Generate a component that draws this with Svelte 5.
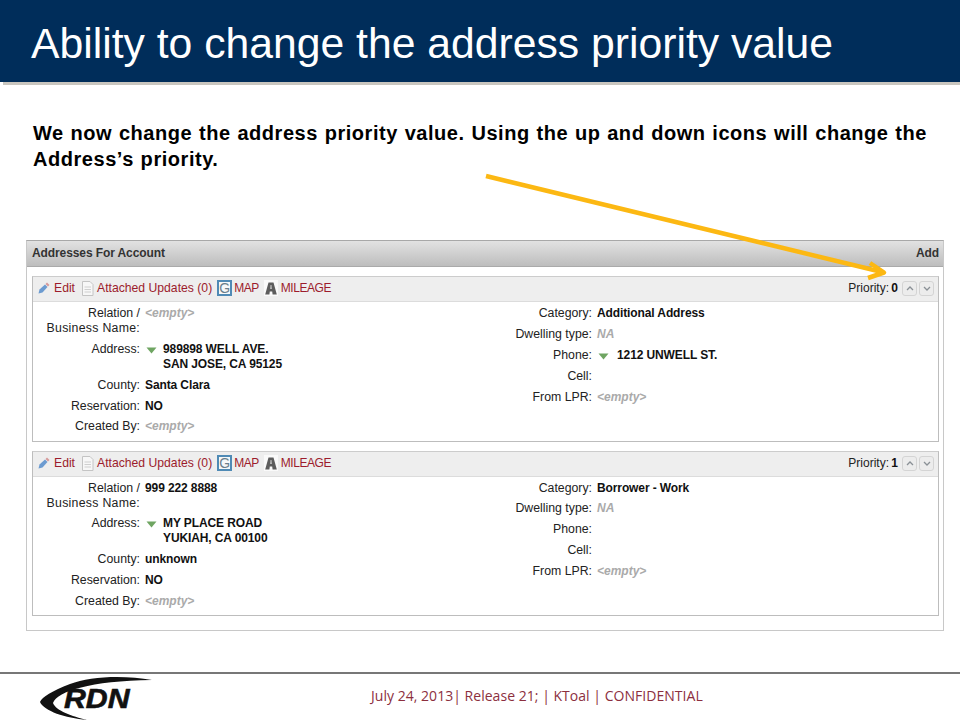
<script>
  const cards = [
    { priority: '0', h: 166, left: [
        { label: ['Relation /', 'Business Name:'], empty: '<empty>', h: 36 },
        { label: ['Address:'], addr: ['989898 WELL AVE.', 'SAN JOSE, CA 95125'], h: 36 },
        { label: ['County:'], value: 'Santa Clara', h: 21 },
        { label: ['Reservation:'], value: 'NO', h: 20 },
        { label: ['Created By:'], empty: '<empty>', h: 21 }
      ], right: [
        { label: 'Category:', value: 'Additional Address', h: 21 },
        { label: 'Dwelling type:', na: 'NA', h: 21 },
        { label: 'Phone:', phone: '1212 UNWELL ST.', h: 21 },
        { label: 'Cell:', h: 21 },
        { label: 'From LPR:', empty: '<empty>', h: 21 }
      ] },
    { priority: '1', h: 165, left: [
        { label: ['Relation /', 'Business Name:'], value: '999 222 8888', h: 35 },
        { label: ['Address:'], addr: ['MY PLACE ROAD', 'YUKIAH, CA 00100'], h: 36 },
        { label: ['County:'], value: 'unknown', h: 21 },
        { label: ['Reservation:'], value: 'NO', h: 21 },
        { label: ['Created By:'], empty: '<empty>', h: 21 }
      ], right: [
        { label: 'Category:', value: 'Borrower - Work', h: 20 },
        { label: 'Dwelling type:', na: 'NA', h: 21 },
        { label: 'Phone:', h: 21 },
        { label: 'Cell:', h: 21 },
        { label: 'From LPR:', empty: '<empty>', h: 21 }
      ] }
  ];
</script>

{#snippet tri()}
  <svg class="tri" width="11" height="7" viewBox="0 0 11 7"><path d="M0.5 0.5H10.500L5.500 6.500Z" fill="#6fa562"/></svg>
{/snippet}

<div class="page">
  <header class="banner"><h1>Ability to change the address priority value</h1></header>
  <div class="rule"></div>
  <p class="intro">We now change the address priority value. Using the up and down icons will change the<br>Address’s priority.</p>

  <section class="panel">
    <div class="panel-head"><span>Addresses For Account</span><span>Add</span></div>
    <div class="panel-body">
      {#each cards as c}
        <article class="card" style="height:{c.h}px">
          <div class="card-head">
            <svg class="ic" width="12" height="12" viewBox="0 0 12 12"><path d="M0.500 11.500L1.500 7.500L7 2.500L9.500 5L4.500 10.500Z" fill="#6c9bd0"/><path d="M7.500 2L9 .5L11.500 3L10 4.500Z" fill="#d79a9a"/></svg>
            <a class="edit">Edit</a>
            <svg class="ic doc" width="13" height="15" viewBox="0 0 13 15"><path d="M1.500 .5H9L12 3.500V14.500H1.500Z" fill="#f7f7f7" stroke="#c4c4c4"/><path d="M3.500 6H10M3.500 8.500H10M3.500 11H10" stroke="#cfcfcf"/></svg>
            <a class="att">Attached Updates (0)</a>
            <span class="g">G</span>
            <a class="map">MAP</a>
            <span class="mile"><svg width="12" height="13" viewBox="0 0 12 13"><path d="M3.500 0.500H8.500L11.800 12.500H7.600L7.200 9.500H4.800L4.400 12.500H.2Z" fill="#5d5d5d"/><path d="M5.500 3H6.500L6.800 7H5.200Z" fill="#c9c9c9"/></svg></span>
            <a class="mile-t">MILEAGE</a>
            <span class="prio">Priority: <b>{c.priority}</b></span>
            <span class="btn"><svg width="8" height="5" viewBox="0 0 8 5"><path d="M1 4L4 1L7 4" fill="none" stroke="#8a9096" stroke-width="1.300"/></svg></span>
            <span class="btn"><svg width="8" height="5" viewBox="0 0 8 5"><path d="M1 1L4 4L7 1" fill="none" stroke="#8a9096" stroke-width="1.300"/></svg></span>
          </div>
          <div class="card-body">
            <div class="col">
              {#each c.left as r}
                <div class="row" style="height:{r.h}px">
                  <div class="lab">{#each r.label as l, i}<div class:wide={i > 0}>{l}</div>{/each}</div>
                  <div class="val">
                    {#if r.empty}<i class="empty">{r.empty}</i>
                    {:else if r.addr}<div class="addr">{@render tri()}<div><b class="line">{r.addr[0]}</b><b class="line">{r.addr[1]}</b></div></div>
                    {:else}<b>{r.value}</b>{/if}
                  </div>
                </div>
              {/each}
            </div>
            <div class="col right">
              {#each c.right as r}
                <div class="row" style="height:{r.h}px">
                  <div class="lab">{r.label}</div>
                  <div class="val">
                    {#if r.empty}<i class="empty">{r.empty}</i>
                    {:else if r.na}<i class="na">{r.na}</i>
                    {:else if r.phone}<div class="addr ph">{@render tri()}<b>{r.phone}</b></div>
                    {:else if r.value}<b>{r.value}</b>{/if}
                  </div>
                </div>
              {/each}
            </div>
          </div>
        </article>
      {/each}
    </div>
  </section>

  <svg class="arrow" width="960" height="300" viewBox="0 0 960 300">
    <path d="M486 176L882 272" stroke="#fcb813" stroke-width="4.500" fill="none"/>
    <path d="M870 263L884 272.500L868 278" stroke="#fcb813" stroke-width="4.500" stroke-linejoin="round" fill="none"/>
  </svg>

  <footer class="foot">
    <div class="logo">
      <svg width="115" height="45" viewBox="0 0 115 45"><path d="M113 4C86 -1 51 0 31 8C13 15 3 21 1 26C5 35 26 42 48 44C33 40 17 35 14 27C19 15 51 5 113 4Z" fill="#111"/></svg>
      <span class="rdn">RDN</span>
    </div>
    <div class="foot-text">July 24, 2013| Release 21; | KToal | CONFIDENTIAL</div>
  </footer>
</div>

<style>
  :global(body) { margin: 0; background: #fff; }
  .page { position: relative; width: 960px; height: 720px; overflow: hidden; font-family: "Liberation Sans", Arial, sans-serif; color: #222; }
  .banner { height: 82px; background: #002d5a; display: flex; align-items: center; padding-left: 31px; box-sizing: border-box; }
  h1 { margin: 0 0 -4px; font-size: 42.700px; font-weight: 400; color: #fff; white-space: nowrap; }
  .rule { height: 3px; margin-left: 3px; background: #c9c6bf; }
  .intro { margin: 0; padding: 35px 0 0 33px; height: 155px; box-sizing: border-box; font-size: 20px; line-height: 26px; font-weight: 700; color: #000; letter-spacing: .54px; word-spacing: .7px; white-space: nowrap; }
  .panel { margin-left: 26px; width: 918px; height: 391px; box-sizing: border-box; border: 1px solid #c8c8c8; border-top-color: #a8a8a8; display: flex; flex-direction: column; }
  .panel-head { height: 23px; flex: none; display: flex; justify-content: space-between; align-items: center; padding: 0 4px 2px 5px; font-size: 12px; letter-spacing: -.1px; font-weight: 700; color: #333; background: linear-gradient(#e2e2e2, #bdbdbd); border-bottom: 1px solid #aaa; }
  .panel-body { padding: 9px 4px 0 5px; display: flex; flex-direction: column; gap: 9px; }
  .card { border: 1px solid #bdbdbd; border-top-color: #ccc; box-sizing: border-box; }
  .card-head { height: 22px; display: flex; align-items: center; padding: 0 4px 2px 5px; font-size: 12.200px; background: #eeeeee; border-bottom: 1px solid #dcdcdc; }
  .card-head a { color: #9c1c2c; }
  .ic { flex: none; }
  .edit { margin-left: 4px; }
  .doc { margin-left: 6px; }
  .att { margin-left: 3px; }
  .g { width: 11px; height: 12px; margin-left: 5px; border: 2px solid #4f8ab5; background: #f6f8f9; color: #6b7f8c; font-size: 14px; line-height: 12px; text-align: center; }
  .map { margin-left: 2px; font-size: 12px; letter-spacing: -.5px; }
  .mile { margin-left: 5px; width: 14px; height: 16px; background: #fafafa; display: flex; align-items: center; justify-content: center; }
  .mile-t { margin-left: 3px; font-size: 12px; letter-spacing: -.42px; }
  .prio { margin-left: auto; color: #222; margin-right: 3px; font-size: 12px; word-spacing: -1px; }
  .prio b { color: #111; }
  .btn { width: 13px; height: 13px; margin-left: 1px; border: 1px solid #d4d4d4; border-radius: 3px; background: #ececec; display: flex; align-items: center; justify-content: center; box-sizing: content-box; }
  .btn + .btn { margin-left: 2px; }
  .card-body { display: flex; padding-top: 2px; }
  .col { width: 452px; flex: none; }
  .row { display: flex; }
  .lab { width: 107px; text-align: right; line-height: 15px; padding-top: 2px; font-size: 12.300px; flex: none; }
  .wide { letter-spacing: .28px; }
  .val { margin-left: 5px; font-size: 12px; letter-spacing: -.11px; line-height: 15px; padding-top: 2px; color: #111; white-space: nowrap; }
  .line { display: block; }
  .addr { display: flex; align-items: flex-start; gap: 6px; }
  .tri { flex: none; margin-top: 5px; margin-left: 1px; }
  .ph { gap: 8px; }
  .empty, .na { color: #aaa; font-weight: 700; font-size: 12px; letter-spacing: 0; }
  .arrow { position: absolute; left: 0; top: 0; pointer-events: none; }
  .foot { position: absolute; left: 0; right: 0; top: 672px; height: 48px; border-top: 2px solid #777; box-sizing: border-box; }
  .logo { position: absolute; left: 39px; top: 2px; width: 115px; height: 45px; }
  .logo svg { position: absolute; left: 0; top: 0; overflow: visible; }
  .rdn { position: absolute; left: 25px; top: 10px; font-size: 27px; line-height: 27px; font-style: italic; font-weight: 700; color: #111; -webkit-text-stroke: .6px #111; transform: scaleX(1.12); transform-origin: left; }
  .foot-text { position: absolute; left: 371px; top: 12px; font-family: "Open Sans", sans-serif; font-size: 14px; letter-spacing: .03px; color: #8c2f3e; white-space: nowrap; }
</style>
